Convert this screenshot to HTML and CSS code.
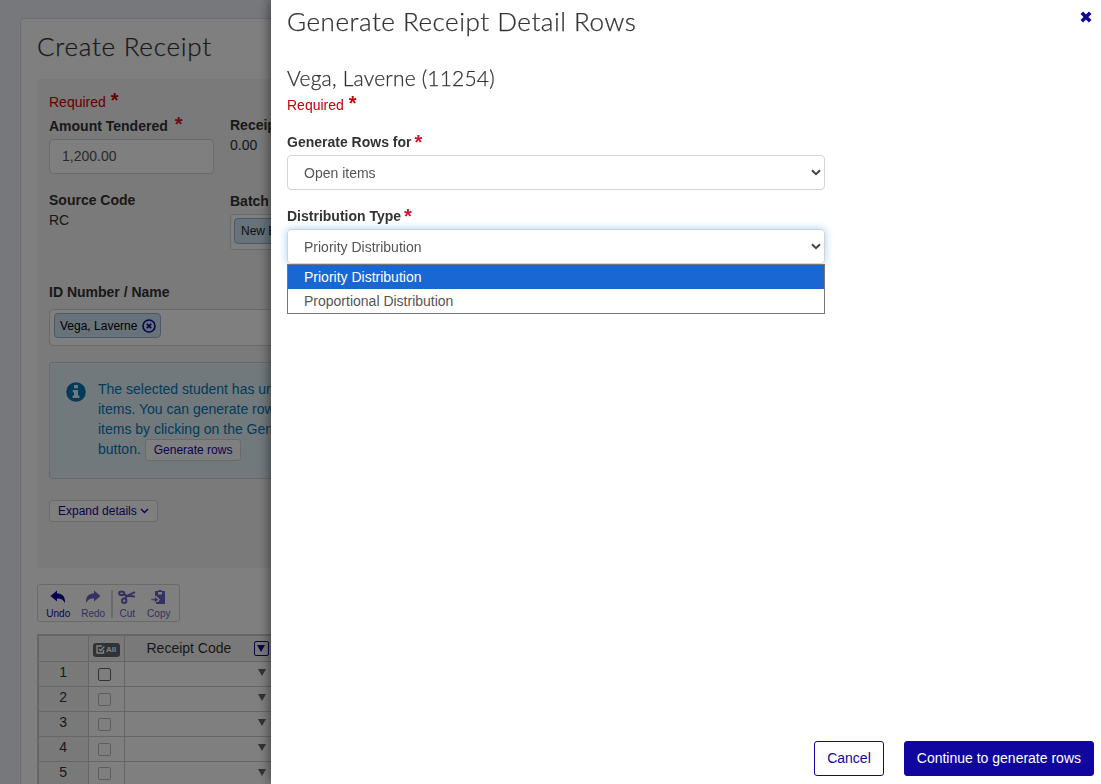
FILE: index.html
```html
<!DOCTYPE html>
<html lang="en">
<head>
  <meta charset="UTF-8" />
  <title>Create Receipt</title>
  <link rel="stylesheet" href="styles.css">
</head>
<body>

  <main class="page">
    <div class="card">
      <h1>Create Receipt</h1>

      <section class="panel">
        <div class="required">Required <span class="star">*</span></div>

        <div class="fields">
          <div class="field amount">
            <label>Amount Tendered <span class="star">*</span></label>
            <div class="text-input">1,200.00</div>
          </div>
          <div class="field receipt-total">
            <label>Receipt Total</label>
            <div>0.00</div>
          </div>
          <div class="field source">
            <label>Source Code</label>
            <div>RC</div>
          </div>
          <div class="field batch">
            <label>Batch</label>
            <div class="lookup"><span class="chip">New Batch</span></div>
          </div>
        </div>

        <div class="field person">
          <label>ID Number / Name</label>
          <div class="lookup">
            <span class="chip">Vega, Laverne
              <svg width="14" height="14" viewBox="0 0 14 14"><circle cx="7" cy="7" r="6" fill="none" stroke="#10069f" stroke-width="1.6"/><path d="M4.8 4.8l4.4 4.4M9.2 4.8L4.8 9.2" stroke="#10069f" stroke-width="1.8"/></svg>
            </span>
          </div>
        </div>

        <div class="info">
          <svg width="20" height="20" viewBox="0 0 20 20"><circle cx="10" cy="10" r="9.8" fill="#0077b3"/><path d="M8 3h4v3.2H8zM6.8 8H12v5.6h1.4V16H6.6v-2.4H8v-3.2H6.8z" fill="#e3f4fc"/></svg>
          <p>The selected student has unpaid open<br>
            items. You can generate rows for these<br>
            items by clicking on the Generate rows<br>
            button. <button class="btn-small">Generate rows</button></p>
        </div>

        <button class="btn-small expand">Expand details
          <svg width="9" height="6" viewBox="0 0 9 6"><path d="M1 1l3.500 3.500L8 1" fill="none" stroke="#10069f" stroke-width="1.300"/></svg>
        </button>
      </section>

      <div class="toolbar">
        <div class="tool undo">
          <svg width="16" height="14" viewBox="0 0 16 14"><path d="M.5 6L7 .5v3c5 0 8.500 2.500 8 9.700C13.500 9.600 11 8.500 7 8.500v3z" fill="currentColor"/></svg>
          <span>Undo</span>
        </div>
        <div class="tool redo">
          <svg width="16" height="14" viewBox="0 0 16 14"><path d="M15.500 6L9 .5v3C4 3.500.500 6 1 13.200 2.500 9.600 5 8.500 9 8.500v3z" fill="currentColor"/></svg>
          <span>Redo</span>
        </div>
        <div class="tool cut">
          <svg width="18" height="14" viewBox="0 0 18 14"><g fill="none" stroke="currentColor" stroke-width="2"><ellipse cx="3.700" cy="3.200" rx="2.600" ry="1.800"/><circle cx="6.200" cy="10.800" r="2.200"/><path d="M6 4.300l3 1.500L17 2.200M7 8.600L9 5.800l8 .700"/></g></svg>
          <span>Cut</span>
        </div>
        <div class="tool copy">
          <svg width="15" height="14" viewBox="0 0 15 14"><path d="M4 1h3c0-1.400 4-1.400 4 0h3v13H5v-2h2l2-2.500-4-4-1 1z" fill="currentColor"/><path d="M7 2h4v2.500H7z" fill="#fff"/><path d="M0 8.800h3.500V6.500L7.500 9.700l-4 3.200v-2.300H0z" fill="currentColor" stroke="#fff" stroke-width=".6"/></svg>
          <span>Copy</span>
        </div>
      </div>

      <table class="grid">
        <thead>
          <tr>
            <th class="num"></th>
            <th class="check"><span class="all"><svg width="9" height="9" viewBox="0 0 9 9"><path d="M6 1H1v7h6.500V5M3 4l1.600 1.700L8.300 1.500" fill="none" stroke="#fff" stroke-width="1.400"/></svg>All</span></th>
            <th class="code"><div class="code-head"><span>Receipt Code</span><span class="filter"><i class="arrow"></i></span></div></th>
          </tr>
        </thead>
        <tbody>
          <tr class="active"><td class="num">1</td><td class="check"><i class="box"></i></td><td class="code"><i class="arrow"></i></td></tr>
          <tr><td class="num">2</td><td class="check"><i class="box"></i></td><td class="code"><i class="arrow"></i></td></tr>
          <tr><td class="num">3</td><td class="check"><i class="box"></i></td><td class="code"><i class="arrow"></i></td></tr>
          <tr><td class="num">4</td><td class="check"><i class="box"></i></td><td class="code"><i class="arrow"></i></td></tr>
          <tr><td class="num">5</td><td class="check"><i class="box"></i></td><td class="code"><i class="arrow"></i></td></tr>
        </tbody>
      </table>
    </div>
  </main>

  <div class="backdrop"></div>

  <aside class="drawer">
    <header>
      <h2>Generate Receipt Detail Rows</h2>
      <svg class="close" width="12" height="12" viewBox="0 0 12 12"><path d="M1.800 1.800l8.400 8.400M10.200 1.800l-8.400 8.400" stroke="#10069f" stroke-width="3.600"/></svg>
    </header>

    <h3>Vega, Laverne (11254)</h3>
    <div class="required">Required <span class="star">*</span></div>

    <div class="form-group">
      <label>Generate Rows for<span class="star">*</span></label>
      <div class="select">Open items
        <svg width="10" height="7" viewBox="0 0 10 7"><path d="M1 1.200l4 4 4-4" fill="none" stroke="#444" stroke-width="2"/></svg>
      </div>
    </div>

    <div class="form-group">
      <label>Distribution Type<span class="star">*</span></label>
      <div class="select focused">Priority Distribution
        <svg width="10" height="7" viewBox="0 0 10 7"><path d="M1 1.200l4 4 4-4" fill="none" stroke="#444" stroke-width="2"/></svg>
      </div>
      <ul class="options">
        <li class="selected">Priority Distribution</li>
        <li>Proportional Distribution</li>
      </ul>
    </div>

    <footer>
      <button class="btn">Cancel</button>
      <button class="btn primary">Continue to generate rows</button>
    </footer>
  </aside>

</body>
</html>
```
FILE: styles.css
```css
* {
  box-sizing: border-box;
}

body {
  margin: 0;
  height: 784px;
  overflow: hidden;
  background: #eef1f6;
  color: #333;
  font: 14px/20px "Liberation Sans", Arial, sans-serif;
}

h1, h2, h3 {
  margin: 0;
  font-family: Lato, sans-serif;
  font-weight: 300;
  white-space: nowrap;
  -webkit-text-stroke: 0.25px #333;
}

h1, h2 {
  font-size: 26px;
  line-height: 30px;
  letter-spacing: 0.53px;
}

h1 {
  letter-spacing: 0.75px;
}

label {
  display: block;
  font-weight: bold;
  white-space: nowrap;
}

svg {
  display: block;
  flex: none;
}

button {
  font-family: inherit;
  white-space: nowrap;
}

.required {
  color: #c00;
}

.star {
  display: inline-block;
  height: 20px;
  color: #d3122f;
  font-size: 20px;
  font-weight: bold;
  line-height: 20px;
  vertical-align: top;
}

.required .star {
  margin-left: 1px;
  color: #c00;
  line-height: 16px;
}

.page {
  height: 784px;
  padding: 18px 20px 0;
  overflow: hidden;
}

.card {
  height: 800px;
  padding: 12px 16px 0;
  background: #fff;
  border: 1px solid #d9dce0;
  border-radius: 4px;
}

.panel {
  height: 489px;
  margin-top: 18px;
  padding: 13px 12px 0;
  background: #f4f4f4;
  border-radius: 4px;
}

.fields {
  display: grid;
  grid-template-columns: 165px 200px;
  grid-template-rows: 75px 92px;
  column-gap: 16px;
  margin-top: 3px;
}

.amount label {
  padding-top: 1px;
}

.amount .star {
  margin-left: 3px;
  line-height: 16px;
}

.batch {
  padding-top: 1px;
}

.text-input {
  height: 35px;
  margin-top: 3px;
  padding: 6px 12px;
  background: #fff;
  border: 1px solid #d4d4d4;
  border-radius: 4px;
  color: #555;
}

.lookup {
  display: flex;
  height: 36px;
  margin-top: 3px;
  padding: 3px;
  background: #fff;
  border: 1px solid #d4d4d4;
  border-radius: 4px;
}

.chip {
  display: flex;
  align-items: center;
  gap: 5px;
  height: 26px;
  padding: 0 5px 0 6px;
  background: #cfe5f5;
  border: 1px solid #98b4cb;
  border-radius: 4px;
  color: #222;
  font-size: 12px;
  white-space: nowrap;
}

.person .lookup {
  height: 37px;
  margin-top: 7px;
  padding: 3px 4px;
}

.person .chip {
  height: 25px;
  padding: 0 4px 0 5px;
  color: #000;
}

.info {
  display: flex;
  gap: 12px;
  height: 117px;
  margin-top: 16px;
  padding: 16px;
  background: #e3f3fa;
  border: 1px solid #c8d4da;
  border-radius: 3px;
  color: #0077b3;
}

.info svg {
  margin-top: 3px;
}

.info p {
  margin: 0;
  white-space: nowrap;
}

.btn-small {
  height: 22px;
  padding: 0 8px;
  background: #fff;
  border: 1px solid #d4d4d4;
  border-radius: 3px;
  color: #10069f;
  font-size: 12px;
  line-height: 18px;
}

.info .btn-small {
  vertical-align: top;
}

.expand {
  display: flex;
  align-items: center;
  gap: 3px;
  margin-top: 21px;
}

.toolbar {
  display: flex;
  width: 143px;
  height: 38px;
  margin-top: 16px;
  padding: 5px 3px 3px;
  border: 1px solid #d4d4d4;
  border-radius: 3px;
}

.tool {
  display: flex;
  flex-direction: column;
  align-items: center;
  width: 35px;
  color: #6a62c4;
  font-size: 10px;
  line-height: 13px;
}

.tool span {
  margin-top: 3px;
}

.undo {
  color: #10069f;
}

.redo {
  width: 38px;
  border-right: 2px solid #d4d4d4;
}

.cut {
  width: 29px;
}

.grid {
  width: 800px;
  margin-top: 12px;
  border-collapse: collapse;
  table-layout: fixed;
  border: 2px solid #ccc;
}

.grid th, .grid td {
  height: 25px;
  padding: 0;
  border: 1px solid #ccc;
  font-weight: normal;
}

.grid th {
  height: 26px;
  background: #f2f2f2;
}

.grid .num {
  width: 50px;
  background: #f2f2f2;
  text-align: center;
}

.grid td.num {
  padding-bottom: 3px;
}

.grid .check {
  width: 36px;
}

.all {
  display: flex;
  align-items: center;
  justify-content: center;
  gap: 1px;
  width: 27px;
  height: 14px;
  margin: 3px auto 0;
  background: #5e6669;
  border-radius: 3px;
  color: #fff;
  font-size: 8px;
  font-weight: bold;
}

.code-head {
  display: flex;
  align-items: center;
  justify-content: space-between;
  width: 144px;
  padding-left: 22px;
}

.filter {
  display: flex;
  align-items: center;
  justify-content: center;
  width: 15px;
  height: 15px;
  border: 1px solid #10069f;
  border-radius: 2px;
}

.arrow {
  display: block;
  width: 0;
  border: 4px solid transparent;
  border-top: 7px solid #666;
  border-bottom: 0;
}

.filter .arrow {
  border-top-color: #10069f;
}

td .arrow {
  margin: 0 0 2px 133px;
}

.box {
  display: block;
  width: 13px;
  height: 13px;
  margin: 1px auto 0 9px;
  border: 1px solid #bbb;
  border-radius: 2px;
}

.active .box {
  border-color: #666;
}

.backdrop {
  position: fixed;
  inset: 0;
  background: rgba(0, 0, 0, 0.5);
}

/* slide-out drawer, covers the page from the right */
.drawer {
  position: fixed;
  top: 0;
  right: 0;
  bottom: 0;
  display: flex;
  flex-direction: column;
  width: 830px;
  padding: 6px 7px 8px 16px;
  background: #fff;
  box-shadow: 0 0 12px rgba(0, 0, 0, 0.6);
}

.drawer header {
  display: flex;
  justify-content: space-between;
}

.close {
  margin: 5px 2px 0 0;
}

.drawer h3 {
  margin-top: 30px;
  font-size: 21px;
  line-height: 24px;
  letter-spacing: 0.2px;
}

.drawer .required {
  margin-top: 5px;
}

.form-group {
  width: 538px;
  margin-top: 17px;
}

.form-group + .form-group {
  margin-top: 16px;
}

.form-group .star {
  margin-left: 3px;
}

.select {
  display: flex;
  align-items: center;
  justify-content: space-between;
  height: 35px;
  margin-top: 3px;
  padding: 0 3px 0 16px;
  border: 1px solid #d4d4d4;
  border-radius: 4px;
  color: #555;
}

.focused {
  box-shadow: 0 0 8px rgba(102, 175, 233, 0.6);
}

.options {
  position: relative;
  margin: 0;
  padding: 0;
  background: #fff;
  border: 1px solid #767676;
  color: #555;
  list-style: none;
}

.options li {
  height: 24px;
  padding-left: 16px;
  line-height: 24px;
}

.options .selected {
  background: #1967d2;
  color: #fff;
}

.drawer footer {
  display: flex;
  justify-content: flex-end;
  gap: 20px;
  margin-top: auto;
}

.btn {
  height: 35px;
  padding: 0 12px 2px;
  background: #fff;
  border: 1px solid #10069f;
  border-radius: 3px;
  color: #10069f;
  font-size: 14px;
}

.primary {
  background: #10069f;
  color: #fff;
}
```
